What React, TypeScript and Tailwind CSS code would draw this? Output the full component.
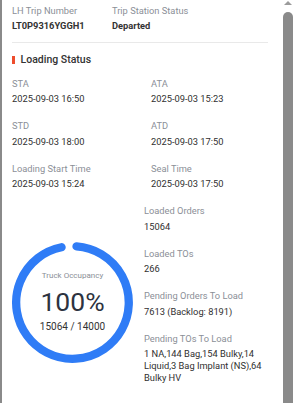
import React from "react";

const Label = ({ children }: { children: React.ReactNode }) => (
  <div className="text-[9.3px] leading-[12px] text-[#8b8f97] whitespace-nowrap">{children}</div>
);

const Item = ({ label, value }: { label: string; value: string }) => (
  <div>
    <Label>{label}</Label>
    <div className="mt-[3.5px] text-[9.3px] leading-[12px] text-[#303030] whitespace-nowrap">{value}</div>
  </div>
);

export default function App() {
  return (
    <div className="flex h-[403px] w-[295px] overflow-hidden bg-white font-[Roboto,sans-serif]">
      <div className="w-[2px] shrink-0 bg-[#8a8a8a]" />
      <div className="w-[280px] shrink-0 pl-[10px] pr-[14px] pt-[5px]">
        <div className="flex">
          <div className="w-[100px]">
            <Label>LH Trip Number</Label>
            <div className="mt-[3px] text-[9.3px] leading-[12px] font-bold text-[#333]">LT0P9316YGGH1</div>
          </div>
          <div>
            <Label>Trip Station Status</Label>
            <div className="mt-[3px] text-[9.3px] leading-[12px] font-bold text-[#333]">Departed</div>
          </div>
        </div>
        <div className="mt-[10px] h-px bg-[#e9e9e9]" />
        <div className="mt-[9.5px] flex items-center">
          <div className="h-[8px] w-[3px] bg-[#ee4d2d]" />
          <div className="ml-[5.5px] text-[10.5px] leading-[14px] font-medium text-[#333]">Loading Status</div>
        </div>
        <div className="mt-[11px] grid grid-cols-[139px_1fr] gap-y-[15px]">
          <Item label="STA" value="2025-09-03 16:50" />
          <Item label="ATA" value="2025-09-03 15:23" />
          <Item label="STD" value="2025-09-03 18:00" />
          <Item label="ATD" value="2025-09-03 17:50" />
          <Item label="Loading Start Time" value="2025-09-03 15:24" />
          <Item label="Seal Time" value="2025-09-03 17:50" />
        </div>
        <div className="mt-[15px] flex items-start">
          <div className="w-[132px] shrink-0">
            <div className="relative mt-[37px] flex h-[121px] w-[121px] flex-col items-center">
              <svg className="absolute inset-0" width="121" height="121" viewBox="0 0 121 121">
                <path
                  d="M 64.53 4.35 A 56.3 56.3 0 1 1 49.57 5.27"
                  fill="none"
                  stroke="#2f7cf6"
                  strokeWidth="8.3"
                  strokeLinecap="round"
                />
              </svg>
              <div className="relative mt-[29px] text-[8px] leading-[10px] text-[#8b8f97] whitespace-nowrap">Truck Occupancy</div>
              <div className="relative mt-[6.3px] text-[26.5px] leading-[30px] text-[#2d3340]">100%</div>
              <div className="relative mt-[3.4px] text-[10px] leading-[12px] text-[#333]">15064 / 14000</div>
            </div>
          </div>
          <div className="flex flex-1 flex-col gap-[15px]">
            <Item label="Loaded Orders" value="15064" />
            <Item label="Loaded TOs" value="266" />
            <Item label="Pending Orders To Load" value="7613 (Backlog: 8191)" />
            <div>
              <Label>Pending TOs To Load</Label>
              <div className="mt-[3.8px] text-[9.3px] leading-[11.7px] text-[#303030]">
                1 NA,144 Bag,154 Bulky,14 Liquid,3 Bag Implant (NS),64 Bulky HV
              </div>
            </div>
          </div>
        </div>
      </div>
      <div className="flex w-[13px] shrink-0 flex-col pl-[1px]">
        <div className="mt-[1px] ml-[0.5px] h-0 w-0 border-x-[4px] border-b-[4px] border-x-transparent border-b-[#9b9b9b]" />
        <div className="mt-[6.5px] w-[9.6px] flex-1 rounded-t-[5px] bg-[#8a8a8a]" />
      </div>
    </div>
  );
}
